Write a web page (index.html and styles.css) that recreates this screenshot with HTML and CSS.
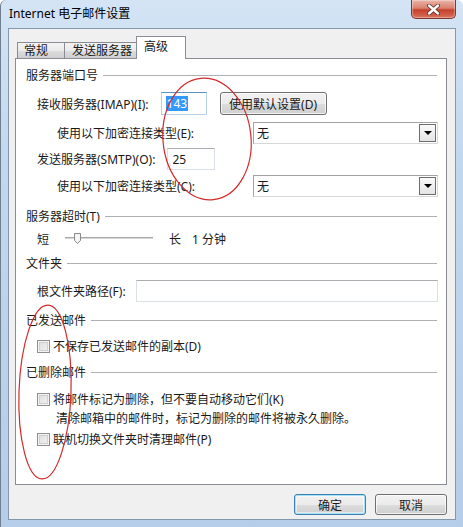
FILE: index.html
```html
<!DOCTYPE html>
<html lang="zh-CN">

<head>
    <meta charset="UTF-8">
    <title>Internet 电子邮件设置</title>
    <link rel="stylesheet" href="styles.css">
</head>

<body>
    <div class="window">
        <!-- 标题栏 -->
        <div class="titlebar">
            <div class="title">Internet 电子邮件设置</div>
            <div class="close-btn">
                <svg width="17" height="11" viewBox="0 0 17 11">
                    <path d="M4 1.5 L13 9.5 M13 1.5 L4 9.5" stroke="#5a2a25" stroke-width="4" stroke-linecap="round" />
                    <path d="M4 1.5 L13 9.5 M13 1.5 L4 9.5" stroke="#ffffff" stroke-width="2.4" stroke-linecap="round" />
                </svg>
            </div>
        </div>

        <div class="client">
            <!-- 选项卡 -->
            <div class="tabs">
                <div class="tab tab-general">常规</div>
                <div class="tab tab-send">发送服务器</div>
                <div class="tab active">高级</div>
            </div>

            <div class="pane">
                <!-- 服务器端口号 -->
                <div class="group-title"><span>服务器端口号</span><div class="rule"></div></div>
                <div class="row row-imap">
                    <span class="label">接收服务器(IMAP)(I):</span>
                    <div class="textbox textbox-focus imap-box"><span class="selected">143</span></div>
                    <div class="button default-setting">使用默认设置(D)</div>
                </div>
                <div class="row row-indent row-enc1">
                    <span class="label enc-label">使用以下加密连接类型(E):</span>
                    <div class="combo"><span>无</span><div class="combo-btn"><i></i></div></div>
                </div>
                <div class="row row-smtp">
                    <span class="label">发送服务器(SMTP)(O):</span>
                    <div class="textbox smtp-box">25</div>
                </div>
                <div class="row row-indent row-enc2">
                    <span class="label enc-label">使用以下加密连接类型(C):</span>
                    <div class="combo"><span>无</span><div class="combo-btn"><i></i></div></div>
                </div>

                <!-- 服务器超时 -->
                <div class="group-title gt-timeout"><span>服务器超时(T)</span><div class="rule"></div></div>
                <div class="row row-slider">
                    <span class="label">短</span>
                    <svg class="slider" width="88" height="14" viewBox="0 0 88 14">
                        <rect x="0" y="5" width="88" height="2" fill="#d6d6d6" />
                        <rect x="0" y="5" width="88" height="1" fill="#a8a8a8" />
                        <path d="M9.5 1.5 H15.5 V8.5 L12.5 11.5 L9.5 8.5 Z" fill="#f4f4f4" stroke="#8a8a8a" />
                    </svg>
                    <span class="label slider-long">长</span>
                    <span class="label slider-value">1 分钟</span>
                </div>

                <!-- 文件夹 -->
                <div class="group-title gt-folder"><span>文件夹</span><div class="rule"></div></div>
                <div class="row row-root">
                    <span class="label">根文件夹路径(F):</span>
                    <div class="textbox root-box"></div>
                </div>

                <!-- 已发送邮件 -->
                <div class="group-title gt-sent"><span>已发送邮件</span><div class="rule"></div></div>
                <div class="row row-check1">
                    <div class="checkbox"></div>
                    <span class="label">不保存已发送邮件的副本(D)</span>
                </div>

                <!-- 已删除邮件 -->
                <div class="group-title gt-deleted"><span>已删除邮件</span><div class="rule"></div></div>
                <div class="row row-check2">
                    <div class="checkbox"></div>
                    <span class="label">将邮件标记为删除，但不要自动移动它们(K)</span>
                </div>
                <div class="row note">清除邮箱中的邮件时，标记为删除的邮件将被永久删除。</div>
                <div class="row row-check3">
                    <div class="checkbox"></div>
                    <span class="label">联机切换文件夹时清理邮件(P)</span>
                </div>
            </div>

            <!-- 底部按钮 -->
            <div class="footer">
                <div class="button dlg-btn primary">确定</div>
                <div class="button dlg-btn">取消</div>
            </div>
        </div>

        <!-- 红色标注圈 -->
        <svg class="marks" width="463" height="527" viewBox="0 0 463 527">
            <ellipse cx="206" cy="139" rx="44" ry="61" transform="rotate(-6 206 139)" fill="none" stroke="#d42a2a" stroke-width="1.2" />
            <ellipse cx="44" cy="392" rx="26" ry="87" transform="rotate(2 44 392)" fill="none" stroke="#d42a2a" stroke-width="1.2" />
        </svg>
    </div>
</body>

</html>
```

FILE: styles.css
```css
:root {
    --frame: #c3d8ee;
    --text: #1a1a1a;
    --border: #898c95;
    --face: #f0f0f0;
}

* {
    margin: 0;
    padding: 0;
    box-sizing: border-box;
}

body {
    width: 463px;
    height: 527px;
    overflow: hidden;
    font-family: 'Segoe UI', 'Noto Sans', 'Noto Sans CJK SC', sans-serif;
    font-size: 12px;
    color: var(--text);
    background: #ffffff;
}

.window {
    position: relative;
    width: 463px;
    height: 527px;
    padding: 0 7px 7px 7px;
    display: flex;
    flex-direction: column;
    background: linear-gradient(180deg, #d4e4f5 0%, #c2d8ee 30%, #b5cde8 100%);
    border-left: 1px solid #6f7f90;
    border-radius: 6px 6px 0 0;
}

/* 标题栏 */
.titlebar {
    height: 28px;
    display: flex;
    align-items: flex-start;
}

.title {
    padding-left: 1px;
    line-height: 28px;
    color: #000;
}

.close-btn {
    margin-left: auto;
    width: 45px;
    height: 19px;
    display: flex;
    justify-content: center;
    align-items: center;
    border: 1px solid #7b3a33;
    border-top: none;
    border-radius: 0 0 5px 5px;
    background: linear-gradient(180deg, #eab3a7 0%, #d9826f 45%, #c5412b 55%, #d8705a 100%);
    box-shadow: inset 0 0 1px 1px rgba(255, 255, 255, 0.35);
}

/* 客户区 */
.client {
    flex: 1;
    display: flex;
    flex-direction: column;
    background: var(--face);
    border: 1px solid #8496ab;
    padding: 7px 8px 0 6px;
}

.tabs {
    height: 22px;
    display: flex;
    align-items: flex-end;
    padding-left: 2px;
}

.tab {
    height: 16px;
    line-height: 15px;
    padding-left: 6px;
    border: 1px solid var(--border);
    border-bottom: none;
    border-right: none;
    background: linear-gradient(180deg, #f3f3f3 0%, #ebebeb 50%, #dddddd 51%, #cfcfcf 100%);
}

.tab-general {
    width: 47px;
}

.tab-send {
    width: 72px;
    padding-left: 7px;
}

.tab.active {
    position: relative;
    z-index: 1;
    width: 50px;
    height: 23px;
    margin-bottom: -1px;
    padding-left: 7px;
    line-height: 20px;
    background: #ffffff;
    border-right: 1px solid var(--border);
}

.pane {
    height: 427px;
    background: #ffffff;
    border: 1px solid var(--border);
    padding: 8px 8px 0 10px;
}

/* 分组标题 */
.group-title {
    height: 16px;
    display: flex;
    align-items: center;
}

.group-title .rule {
    flex: 1;
    height: 1px;
    margin-left: 5px;
    margin-right: 1px;
    background: #b0b0b0;
}

.gt-timeout { margin-top: 11px; }
.gt-folder { margin-top: 8px; }
.gt-sent { margin-top: 10px; }
.gt-deleted { margin-top: 10px; }

.row {
    display: flex;
    align-items: center;
    padding-left: 11px;
    white-space: nowrap;
}

.row-indent {
    padding-left: 31px;
}

.row-imap { margin-top: 9px; height: 23px; }
.row-enc1 { margin-top: 7px; height: 22px; }
.row-smtp { margin-top: 4px; height: 22px; }
.row-enc2 { margin-top: 5px; height: 22px; }
.row-slider { margin-top: 7px; height: 16px; }
.row-root { margin-top: 9px; height: 22px; }
.row-check1 { margin-top: 10px; height: 16px; }
.row-check2 { margin-top: 11px; height: 16px; }
.row-check3 { margin-top: 5px; height: 16px; }

.note {
    margin-top: 3px;
    height: 16px;
    padding-left: 30px;
}

/* 输入框 */
.textbox {
    height: 22px;
    display: flex;
    align-items: center;
    padding-left: 4px;
    background: #ffffff;
    border: 1px solid #dbdfe6;
    border-top-color: #abadb3;
}

.textbox-focus {
    border-color: #b6d1ea;
    border-top-color: #5794bf;
}

.imap-box {
    width: 46px;
    height: 23px;
    margin-left: 12px;
}

.selected {
    background: #3399ff;
    color: #ffffff;
    line-height: 15px;
    padding: 0 1px;
}

.smtp-box {
    width: 48px;
    margin-left: 12px;
}

.root-box {
    flex: 1;
    margin-left: 10px;
}

/* 按钮 */
.button {
    display: flex;
    justify-content: center;
    align-items: center;
    border: 1px solid #707070;
    border-radius: 3px;
    background: linear-gradient(180deg, #f2f2f2 0%, #ebebeb 50%, #dddddd 51%, #cfcfcf 100%);
    box-shadow: inset 0 0 0 1px rgba(255, 255, 255, 0.7);
}

.default-setting {
    width: 107px;
    height: 23px;
    margin-left: 13px;
}

/* 下拉框 */
.enc-label {
    width: 196px;
}

.combo {
    flex: 1;
    height: 22px;
    display: flex;
    align-items: center;
    padding-left: 3px;
    background: #ffffff;
    border: 1px solid #a3a3a3;
    border-right-color: #d7d7d7;
    border-bottom-color: #d7d7d7;
}

.combo-btn {
    margin-left: auto;
    margin-right: 1px;
    width: 17px;
    height: 18px;
    display: flex;
    justify-content: center;
    align-items: center;
    border: 1px solid #6d6d6d;
    background: linear-gradient(180deg, #fafafa 0%, #e4e4e4 100%);
}

.combo-btn i {
    width: 0;
    height: 0;
    border-left: 4px solid transparent;
    border-right: 4px solid transparent;
    border-top: 4px solid #000;
}

/* 滑块 */
.slider {
    margin-left: 16px;
}

.slider-long {
    margin-left: 16px;
}

.slider-value {
    margin-left: 11px;
}

/* 复选框 */
.checkbox {
    width: 13px;
    height: 13px;
    margin-right: 3px;
    border: 1px solid #8f8f8f;
    background: linear-gradient(135deg, #dcdcdc 0%, #f4f4f4 100%);
    box-shadow: inset 0 0 0 1px #f4f4f4, inset 0 0 0 2px #cfcfcf;
}

/* 底部按钮 */
.footer {
    display: flex;
    justify-content: flex-end;
    gap: 9px;
    padding-top: 9px;
}

.dlg-btn {
    width: 72px;
    height: 21px;
}

.dlg-btn.primary {
    border-color: #3c7fb1;
    box-shadow: inset 0 0 0 1px #a6e1f7, inset 0 0 0 2px rgba(255, 255, 255, 0.5);
}

/* 标注 */
.marks {
    position: absolute;
    top: 0;
    left: 0;
    pointer-events: none;
}
```
